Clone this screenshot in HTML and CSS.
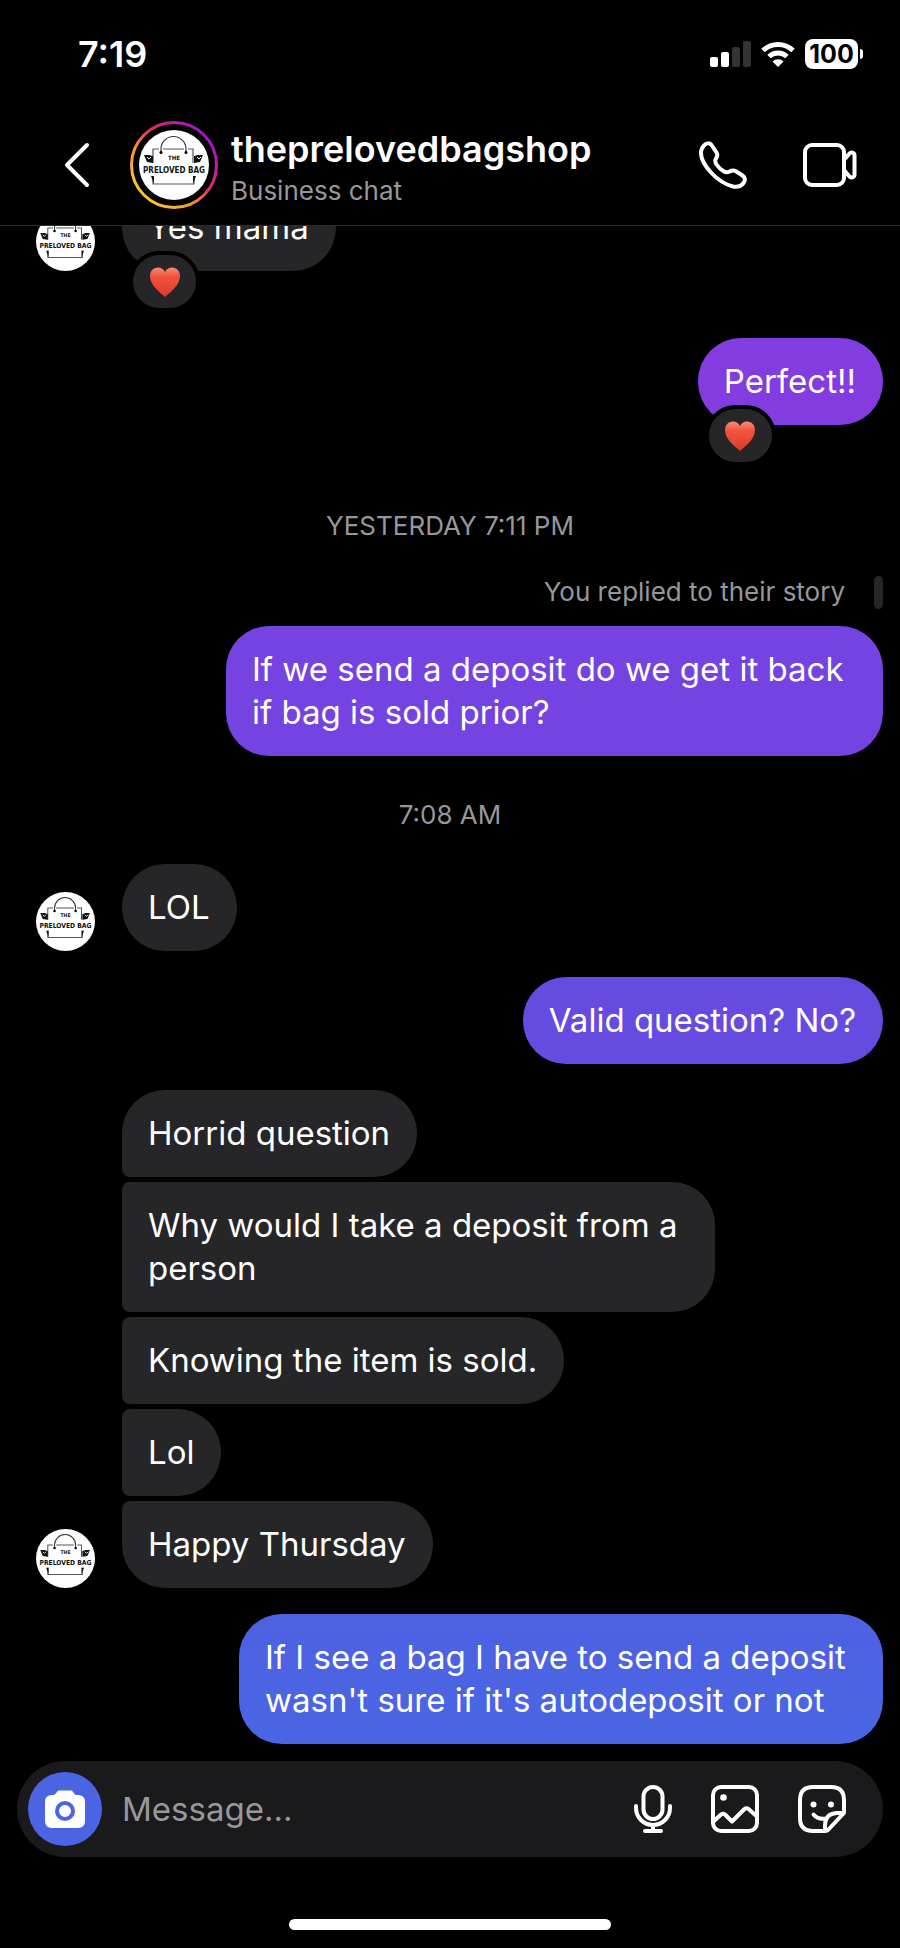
FILE: index.html
```html
<!DOCTYPE html>
<html lang="en">
<head>
<meta charset="utf-8">
<meta name="viewport" content="width=device-width, initial-scale=1">
<title>theprelovedbagshop</title>
<link rel="stylesheet" href="styles.css">
</head>
<body>
<svg class="defs" aria-hidden="true">
  <defs>
    <clipPath id="round"><circle cx="35" cy="35" r="35"/></clipPath>
    <linearGradient id="ring" x1="0.15" y1="0.85" x2="0.85" y2="0.15">
      <stop offset="0" stop-color="#fcc32c"/>
      <stop offset="0.3" stop-color="#f59a30"/>
      <stop offset="0.6" stop-color="#e0305f"/>
      <stop offset="0.85" stop-color="#c41aa6"/>
      <stop offset="1" stop-color="#a516c4"/>
    </linearGradient>
    <linearGradient id="heart-fill" x1="0" y1="0" x2="0" y2="1">
      <stop offset="0" stop-color="#fa8a78"/>
      <stop offset="0.3" stop-color="#f0553f"/>
      <stop offset="1" stop-color="#dd3a28"/>
    </linearGradient>
    <symbol id="logo" viewBox="0 0 70 70">
      <g clip-path="url(#round)">
        <rect width="70" height="70" fill="#fff"/>
        <path d="M22 22V19a12.500 12.500 0 0 1 25 0V22" fill="none" stroke="#333" stroke-width="1.200"/>
        <circle cx="22" cy="22.500" r="1.500"/><circle cx="47" cy="22.500" r="1.500"/>
        <path d="M14 33V19H20M24 19H45M49 19H54V33M14 46V54H55V46" fill="none" stroke="#555" stroke-width="1.200"/>
        <path d="M14 26l-4-1-5 0 3 7 6 1zM55 26l4-1 5 0-3 7-6 1zM12 46h3v8zM57 46h-3v8z" fill="#111"/>
        <path d="M8 27l2 2 2-2M58 27l2 2 2-2" fill="none" stroke="#fff"/>
        <text class="logo-small" x="35" y="30" text-anchor="middle">THE</text>
        <text class="logo-text" x="35" y="43" text-anchor="middle">PRELOVED BAG</text>
      </g>
    </symbol>
    <symbol id="heart" viewBox="0 0 30 30">
      <path d="M15 30C11 26 0 19 0 9C0 4 3.500 0.500 8 0.500C11 0.500 13.800 2 15 5C16.200 2 19 0.500 22 0.500C26.500 0.500 30 4 30 9C30 19 19 26 15 30Z" fill="url(#heart-fill)"/>
    </symbol>
  </defs>
</svg>

<div class="app">
  <div class="status">
    <time class="clock">7:19</time>
    <div class="status-icons">
      <svg class="signal" viewBox="0 0 41 26" aria-hidden="true">
        <rect y="16" width="8" height="10" rx="2" fill="#fff"/><rect x="11" y="11" width="8" height="15" rx="2" fill="#fff"/>
        <rect x="22" y="6" width="8" height="20" rx="2" fill="#333"/><rect x="33" width="8" height="26" rx="2" fill="#333"/>
      </svg>
      <svg class="wifi" viewBox="0 0 34 26" aria-hidden="true">
        <path d="M2 9.500A21.500 21.500 0 0 1 32 9.500" fill="none" stroke="#fff" stroke-width="5"/>
        <path d="M8 15.500A13 13 0 0 1 26 15.500" fill="none" stroke="#fff" stroke-width="5"/>
        <path d="M17 26L11.500 20.500A8 8 0 0 1 22.500 20.500Z" fill="#fff"/>
      </svg>
      <div class="battery"><span class="battery-level">100</span><span class="battery-tip"></span></div>
    </div>
  </div>

  <header class="header">
    <button class="icon-button back" type="button" aria-label="Back">
      <svg width="26" height="46" viewBox="0 0 26 46"><path d="M23 3L3 23L23 43" class="line chevron"/></svg>
    </button>
    <div class="ring">
      <svg class="ring-line" viewBox="0 0 88 88" aria-hidden="true"><circle cx="44" cy="44" r="42.500" fill="none" stroke="url(#ring)" stroke-width="3"/></svg>
      <svg class="ring-logo" role="img" aria-label="The Preloved Bag"><use href="#logo"/></svg>
    </div>
    <div class="who">
      <h1 class="name">theprelovedbagshop</h1>
      <p class="kind">Business chat</p>
    </div>
    <div class="calls">
      <button class="icon-button" type="button" aria-label="Audio call">
        <svg width="48" height="48" viewBox="0 0 48 48"><path class="line" d="M5 4.500C7 2 10.500 1.500 12.500 4L17.500 11.500C19 14 18.500 15.500 17 17.500C15.500 19.500 16 21 17.500 23.500C19.500 26.500 21.500 28.500 25 30.500C27 31.700 28.500 31.500 30.500 30.500C33 29 34.500 29 36.500 30L43.500 34.500C46.500 36.500 46.500 39.500 44.500 42C42 45.500 39 46.500 34 45.500C26 43.500 18 38 12 31.500C6 25 1.500 17 2 10.500C2.200 8 3.500 6 5 4.500Z"/></svg>
      </button>
      <button class="icon-button" type="button" aria-label="Video call">
        <svg width="54" height="44" viewBox="0 0 54 44"><rect class="line" x="2" y="2" width="39" height="40" rx="7"/><path class="line" d="M41 17L46 11C48 8.500 51.500 9.500 51.500 12.500V31.500C51.500 34.500 48 35.500 46 33L41 27"/></svg>
      </button>
    </div>
  </header>

  <main class="chat">
    <div class="row">
      <svg class="avatar" aria-hidden="true"><use href="#logo"/></svg>
      <div class="bubble">Yes mama<span class="reaction"><svg class="heart" role="img" aria-label="Love"><use href="#heart"/></svg></span></div>
    </div>
    <div class="row sent after-reaction">
      <div class="bubble purple">Perfect!!<span class="reaction"><svg class="heart" role="img" aria-label="Love"><use href="#heart"/></svg></span></div>
    </div>
    <p class="stamp stamp-day">YESTERDAY 7:11 PM</p>
    <div class="story"><span>You replied to their story</span><span class="story-bar"></span></div>
    <div class="row sent">
      <div class="bubble violet wide">If we send a deposit do we get it back if bag is sold prior?</div>
    </div>
    <p class="stamp">7:08 AM</p>
    <div class="row">
      <svg class="avatar" aria-hidden="true"><use href="#logo"/></svg>
      <div class="bubble">LOL</div>
    </div>
    <div class="row sent turn">
      <div class="bubble indigo">Valid question? No?</div>
    </div>
    <div class="row turn">
      <svg class="avatar" aria-hidden="true"><use href="#logo"/></svg>
      <div class="stack">
        <div class="bubble">Horrid question</div>
        <div class="bubble narrow">Why would I take a deposit from a person</div>
        <div class="bubble">Knowing the item is sold.</div>
        <div class="bubble">Lol</div>
        <div class="bubble">Happy Thursday</div>
      </div>
    </div>
    <div class="row sent turn">
      <div class="bubble blue medium">If I see a bag I have to send a deposit wasn't sure if it's autodeposit or not</div>
    </div>
  </main>

  <footer class="footer">
    <form class="composer">
      <button class="camera" type="button" aria-label="Camera">
        <svg width="40" height="38" viewBox="0 0 40 38"><path d="M7 5H9C10.500 5 11.500 1 14 0.500H26C28.500 1 29.500 5 31 5H33Q40 5 40 12V31Q40 38 33 38H7Q0 38 0 31V12Q0 5 7 5Z" fill="#fff"/><circle cx="20" cy="21" r="8" fill="#fff" stroke="#4a64e3" stroke-width="4"/></svg>
      </button>
      <input class="field" type="text" placeholder="Message..." aria-label="Message">
      <div class="tools">
        <button class="icon-button" type="button" aria-label="Voice message">
          <svg width="38" height="48" viewBox="0 0 38 48"><rect class="line" x="9.500" y="2" width="19" height="32" rx="9.500"/><path class="line" d="M2 21V23A17 17 0 0 0 36 23V21M19 40V46M11 46H27"/></svg>
        </button>
        <button class="icon-button" type="button" aria-label="Photo">
          <svg width="48" height="48" viewBox="0 0 48 48"><rect class="line" x="2" y="2" width="44" height="44" rx="8"/><circle cx="12.500" cy="12.500" r="3.300" fill="#fff"/><path class="line" d="M3 36L10 29.500Q12 28 14 29.500L21 36.500L33.500 24Q35.500 22.500 37.500 24L46 31.500"/></svg>
        </button>
        <button class="icon-button" type="button" aria-label="Stickers">
          <svg width="48" height="48" viewBox="0 0 48 48"><path class="line" d="M27 46H15Q2 46 2 33V15Q2 2 15 2H33Q46 2 46 15V26Q46 28 44.500 29.500L30.500 44.500Q29 46 27 46V41Q27 28 40 28H46M15.500 29.500Q20 35 28 33.500"/><circle cx="15.500" cy="19.500" r="3" fill="#fff"/><circle cx="33" cy="19.500" r="3" fill="#fff"/></svg>
        </button>
      </div>
    </form>
    <div class="home"></div>
  </footer>
</div>
</body>
</html>
```

FILE: styles.css
```css
* {
  box-sizing: border-box;
}

body {
  margin: 0;
  background: #000;
  color: #fff;
  font-family: Inter, "Liberation Sans", sans-serif;
  font-size: 33px;
  line-height: 43px;
}

h1,
p {
  margin: 0;
}

.defs {
  position: absolute;
  width: 0;
  height: 0;
}

.logo-small,
.logo-text {
  font-family: "DejaVu Sans Condensed", "DejaVu Sans", sans-serif;
  font-weight: 700;
  fill: #111;
}

.logo-small {
  font-size: 6px;
}

.logo-text {
  font-size: 8px;
}

.app {
  display: flex;
  flex-direction: column;
  height: 100vh;
}

/* Status bar */
.status {
  display: flex;
  justify-content: space-between;
  align-items: center;
  height: 108px;
  padding: 0 37px 0 78px;
}

.clock {
  font-size: 36px;
  font-weight: 600;
}

.status-icons {
  display: flex;
  align-items: center;
  gap: 10px;
}

.signal {
  width: 41px;
  height: 26px;
}

.wifi {
  width: 34px;
  height: 26px;
}

.battery {
  display: flex;
  align-items: center;
  gap: 2px;
}

.battery-level {
  width: 53px;
  border-radius: 8px;
  background: #fff;
  color: #000;
  font-size: 25px;
  font-weight: 700;
  line-height: 30px;
  text-align: center;
}

.battery-tip {
  width: 3px;
  height: 10px;
  border-radius: 0 4px 4px 0;
  background: #fff;
}

/* Header */
.header {
  display: flex;
  align-items: center;
  height: 118px;
  padding: 0 43px 3px 64px;
  border-bottom: 1px solid #2b2b2d;
}

.icon-button {
  display: flex;
  padding: 0;
  border: 0;
  background: none;
}

.line {
  fill: none;
  stroke: #fff;
  stroke-width: 4;
  stroke-linecap: round;
  stroke-linejoin: round;
}

.back {
  margin-right: 40px;
}

.ring {
  display: grid;
  place-items: center;
  width: 88px;
  height: 88px;
  margin-right: 13px;
}

.ring-line,
.ring-logo {
  grid-area: 1 / 1;
}

.ring-logo {
  width: 70px;
  height: 70px;
}

.who {
  flex: 1;
  padding-top: 10px;
}

.name {
  font-size: 36px;
  font-weight: 600;
  line-height: 40px;
}

.kind {
  color: #98979b;
  font-size: 26px;
  line-height: 43px;
}

.calls {
  display: flex;
  align-items: center;
  gap: 56px;
}

/* Conversation */
.chat {
  display: flex;
  flex: 1;
  flex-direction: column;
  justify-content: flex-end;
  min-height: 0;
  overflow: hidden;
  padding: 0 17px 17px 36px;
}

.row {
  display: flex;
  align-items: flex-end;
  gap: 27px;
}

.sent {
  justify-content: flex-end;
}

.turn {
  margin-top: 26px;
}

.after-reaction {
  margin-top: 67px;
}

.avatar {
  flex: none;
  width: 59px;
  height: 59px;
}

.stack {
  display: flex;
  flex-direction: column;
  align-items: flex-start;
  gap: 5px;
}

.bubble {
  position: relative;
  padding: 22px 27px 22px 26px;
  border-radius: 43px;
  background: #262528;
}

.stack .bubble:not(:last-child) {
  border-bottom-left-radius: 8px;
}

.stack .bubble:not(:first-child) {
  border-top-left-radius: 8px;
}

.wide {
  max-width: 657px;
}

.medium {
  max-width: 644px;
}

.narrow {
  max-width: 593px;
}

.purple {
  background: #833ce0;
}

.violet {
  background: #7443e2;
}

.indigo {
  background: #664be1;
}

.blue {
  background: linear-gradient(#4e61e2, #4966e3);
}

.reaction {
  position: absolute;
  bottom: -41px;
  left: 7px;
  display: grid;
  place-items: center;
  width: 71px;
  height: 61px;
  border: 4px solid #000;
  border-radius: 31px;
  background: #262628;
}

.heart {
  width: 30px;
  height: 30px;
}

.stamp,
.story {
  color: #98979b;
  font-size: 26px;
  line-height: 36px;
}

.stamp {
  margin: 41px 0 31px;
  padding-right: 19px;
  text-align: center;
}

.stamp-day {
  margin: 83px 0 30px;
}

.story {
  display: flex;
  justify-content: flex-end;
  align-items: center;
  gap: 29px;
  margin-bottom: 16px;
}

.story-bar {
  width: 9px;
  height: 33px;
  border-radius: 5px;
  background: #262528;
}

/* Composer */
.footer {
  padding: 0 17px 18px;
}

.composer {
  display: flex;
  align-items: center;
  gap: 20px;
  height: 96px;
  padding: 0 37px 0 11px;
  border-radius: 48px;
  background: #1a191c;
}

.camera {
  display: grid;
  flex: none;
  place-items: center;
  width: 74px;
  height: 74px;
  padding: 0;
  border: 0;
  border-radius: 50%;
  background: #4a64e3;
}

.field {
  flex: 1;
  min-width: 0;
  padding: 0;
  border: 0;
  outline: 0;
  background: none;
  color: #fff;
  font: inherit;
}

.field::placeholder {
  color: #98979b;
  opacity: 1;
}

.tools {
  display: flex;
  align-items: center;
  gap: 39px;
}

.home {
  width: 322px;
  max-width: 40%;
  height: 11px;
  margin: 62px auto 0;
  border-radius: 6px;
  background: #fff;
}
```
